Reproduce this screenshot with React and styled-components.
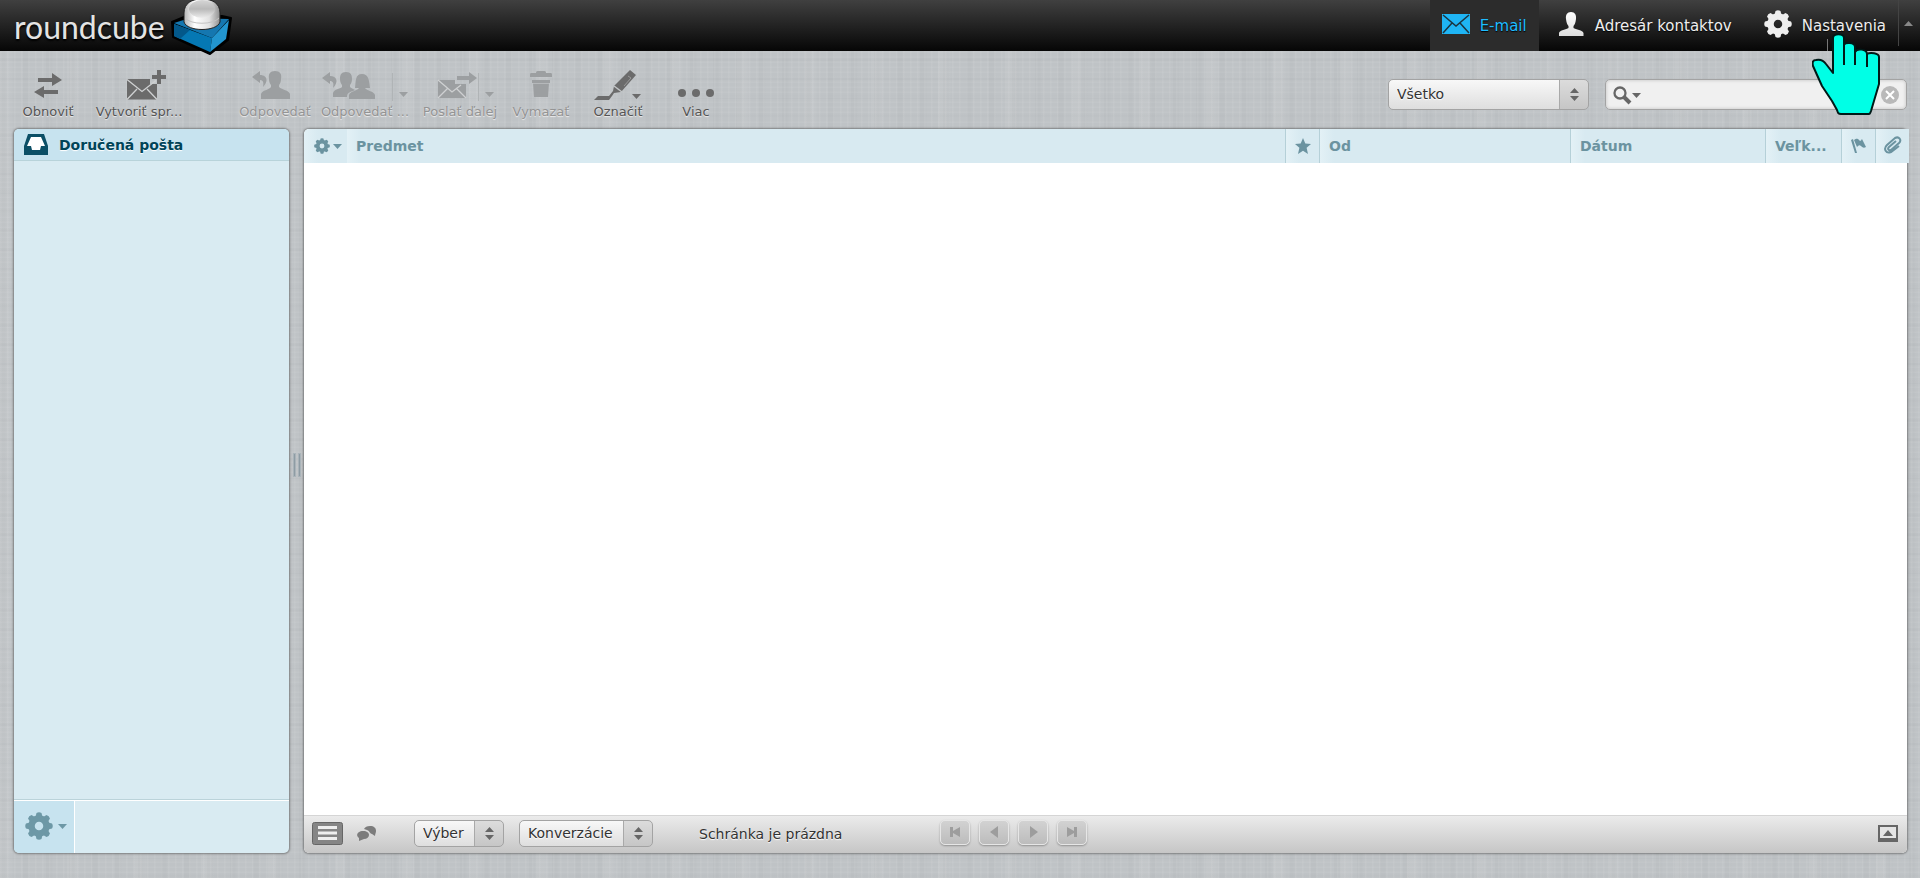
import React from 'react';
import styled, { createGlobalStyle, ThemeProvider } from 'styled-components';

const theme = {
  font: '"DejaVu Sans", Verdana, sans-serif',
  text: '#333',
  accent: '#1fbdff',
  list: '#d8eaf1',
  listHead: '#c7e3ef',
  listText: '#6b93a0',
  folderText: '#004458',
  border: '#a3a3a3',
};

const GlobalStyle = createGlobalStyle`
  * {
    box-sizing: border-box;
  }

  body {
    margin: 0;
    font-family: ${theme.font};
    font-size: 14px;
    color: ${theme.text};
  }

  button, input, select {
    font-family: inherit;
    font-size: 14px;
    color: inherit;
  }
`;

/* Linen texture: a few soft stripes with different periods */
const Page = styled.div`
  min-height: 100vh;
  display: flex;
  flex-direction: column;
  background-color: #bfc3c6;
  background-image:
    repeating-linear-gradient(90deg, rgba(255, 255, 255, 0.06) 0 1px, transparent 2px 7px),
    repeating-linear-gradient(90deg, rgba(0, 0, 0, 0.015) 0 5px, transparent 7px 23px),
    repeating-linear-gradient(90deg, rgba(255, 255, 255, 0.06) 0 9px, transparent 14px 67px),
    repeating-linear-gradient(0deg, rgba(255, 255, 255, 0.05) 0 1px, transparent 2px 5px),
    repeating-linear-gradient(0deg, rgba(0, 0, 0, 0.015) 0 2px, transparent 4px 19px);
`;

/* Top bar */
const TopBar = styled.header`
  height: 51px;
  display: flex;
  align-items: stretch;
  justify-content: space-between;
  padding-left: 14px;
  background: linear-gradient(to bottom, #404040 0%, #060606 100%);
`;

const Logo = styled.a`
  display: flex;
  align-items: flex-start;
  height: 56px;
  color: #e4e4e4;
  text-decoration: none;
`;

const LogoText = styled.span`
  width: 156px;
  font-family: Lato, sans-serif;
  font-size: 32px;
  line-height: 54px;
  text-shadow: 0 2px 2px #000;
  white-space: nowrap;
`;

const TaskNav = styled.nav`
  display: flex;
`;

const Task = styled.a`
  display: flex;
  align-items: center;
  gap: 10px;
  padding: 0 12px;
  font-size: 15px;
  line-height: 20px;
  color: ${(props) => (props.$active ? props.theme.accent : '#eee')};
  background: ${(props) => (props.$active ? '#2c2c2c' : 'transparent')};
  text-decoration: none;
  text-shadow: 0 1px 1px #000;
  white-space: nowrap;

  & + & {
    margin-left: 8px;
  }

  svg {
    flex: none;
    margin-bottom: 4px;
  }
`;

const TopToggle = styled.button`
  display: flex;
  align-items: center;
  justify-content: center;
  width: 22px;
  height: 46px;
  padding: 0 2px 0 0;
  border: 0;
  border-left: 1px solid #444;
  background: none;
  color: #888;
`;

const Pointer = styled.div`
  position: absolute;
  top: 32px;
  right: 37px;
  z-index: 5;
  pointer-events: none;

  svg {
    display: block;
  }
`;

/* Toolbar */
const Toolbar = styled.div`
  height: 78px;
  display: flex;
  justify-content: space-between;
  padding: 0 13px 0 12px;
`;

const ToolGroup = styled.div`
  display: flex;
  padding-top: 19px;
`;

const ToolItem = styled.div`
  position: relative;
  width: ${(props) => props.$width}px;
  margin-left: ${(props) => props.$space || 0}px;
`;

const ToolButton = styled.button`
  display: flex;
  flex-direction: column;
  align-items: center;
  width: 100%;
  padding: 0;
  border: 0;
  background: none;
  font-size: 13px;
  line-height: 20px;
  color: ${(props) => (props.disabled ? '#949494' : '#555')};
  text-shadow: 0 1px 1px #eee;
  white-space: nowrap;

  svg {
    display: block;
    height: 32px;
    color: ${(props) => (props.disabled ? '#9c9fa1' : '#6b6b6b')};
  }
`;

const SplitCaret = styled.button`
  position: absolute;
  top: 3px;
  right: ${(props) => props.$right}px;
  display: flex;
  align-items: center;
  justify-content: center;
  width: 22px;
  height: 28px;
  padding: 14px 0 0;
  border: 0;
  border-left: 1px solid #b0b4b6;
  background: none;
  color: #9c9fa1;
`;

const Filters = styled.div`
  display: flex;
  align-items: flex-start;
  gap: 16px;
  padding-top: 28px;
`;

const SelectBox = styled.label`
  position: relative;
  display: flex;
  width: ${(props) => props.$width}px;
  height: ${(props) => props.$height}px;

  svg {
    position: absolute;
    top: 0;
    right: 10px;
    height: 100%;
    color: #666;
    pointer-events: none;
  }
`;

const Select = styled.select`
  appearance: none;
  width: 100%;
  padding: 0 30px 2px 8px;
  border: 1px solid ${(props) => props.theme.border};
  border-radius: 5px;
  background:
    linear-gradient(to right, #a9a9a9 0 1px, transparent 1px) right / 29px 100% no-repeat,
    linear-gradient(to bottom, #dcdcdc, #c6c6c6) right / 29px 100% no-repeat,
    linear-gradient(to bottom, #f8f8f8, #dedede);
  text-shadow: 0 1px 1px #fff;
`;

const SearchBox = styled.form`
  display: flex;
  align-items: center;
  width: 302px;
  height: 31px;
  padding: 0 7px;
  border: 1px solid ${(props) => props.theme.border};
  border-radius: 5px;
  background: #f0f0f0;
  box-shadow: inset 0 0 3px 1px rgba(0, 0, 0, 0.12);
`;

const IconButton = styled.button`
  display: flex;
  align-items: center;
  padding: 0;
  border: 0;
  background: none;
  color: #666;
`;

const SearchInput = styled.input`
  flex: 1;
  min-width: 0;
  border: 0;
  outline: 0;
  background: transparent;
`;

/* Main area */
const Main = styled.main`
  flex: 1;
  display: flex;
  padding: 0 13px 25px 14px;
`;

const Folders = styled.aside`
  width: 275px;
  display: flex;
  flex-direction: column;
  border-radius: 5px;
  background: #d9ebf2;
  box-shadow: 0 0 2px 1px rgba(80, 80, 80, 0.6);
  overflow: hidden;
`;

const FolderLink = styled.a`
  display: flex;
  align-items: center;
  gap: 11px;
  height: 32px;
  padding-left: 10px;
  border-bottom: 1px solid #b8d3da;
  background: ${(props) => props.theme.listHead};
  font-weight: bold;
  color: ${(props) => props.theme.folderText};
  text-decoration: none;
  text-shadow: 0 1px 1px #fff;
`;

const FolderFooter = styled.div`
  display: flex;
  height: 53px;
  margin-top: auto;
  border-top: 1px solid #fff;
  box-shadow: 0 -1px 0 #bbd3da;
`;

const FolderOptions = styled.button`
  display: flex;
  align-items: center;
  gap: 5px;
  width: 61px;
  padding: 0 0 2px 11px;
  border: 0;
  border-right: 1px solid #fff;
  background: ${(props) => props.theme.listHead};
  color: #6d98a6;
`;

const Splitter = styled.div`
  display: flex;
  align-items: center;
  justify-content: center;
  gap: 2px;
  width: 15px;
  padding-bottom: 52px;
`;

const Grip = styled.span`
  width: 3px;
  height: 24px;
  border: 1px solid #a9b3b9;
  background: #8e9ca4;
`;

const Messages = styled.section`
  flex: 1;
  min-width: 0;
  display: flex;
  flex-direction: column;
  border-radius: 5px;
  background: #fff;
  box-shadow: 0 0 2px 1px rgba(80, 80, 80, 0.6);
`;

const MessageTable = styled.table`
  width: calc(100% + 2px);
  table-layout: fixed;
  border-collapse: separate;
  border-spacing: 0;
`;

const HeadCell = styled.th`
  width: ${(props) => (props.$width ? `${props.$width}px` : 'auto')};
  height: 34px;
  padding: ${(props) => (props.$icon ? '0' : '0 0 0 9px')};
  border-left: ${(props) => (props.$plain ? '0' : '1px solid #b5d0d8')};
  background: linear-gradient(to right, #e3f1f6 0, ${(props) => props.theme.list} 14px);
  font-size: 14px;
  text-align: left;
  color: ${(props) => props.theme.listText};
  white-space: nowrap;
  overflow: hidden;

  &:first-child {
    border-top-left-radius: 5px;
  }

  svg {
    display: block;
    margin: 0 auto;
  }
`;

const HeadOptions = styled(IconButton)`
  gap: 3px;
  padding-left: 10px;
  color: ${(props) => props.theme.listText};

  svg {
    margin: 0;
  }
`;

const ListFooter = styled.footer`
  display: flex;
  align-items: center;
  height: 38px;
  margin-top: auto;
  padding: 0 9px 2px 8px;
  border-top: 1px solid #d5d5d5;
  border-radius: 0 0 5px 5px;
  background: linear-gradient(to bottom, #ebebeb, #c6c6c6);
`;

const ModeButtons = styled.div`
  display: flex;
  gap: 14px;
  width: 102px;
`;

const FooterSelects = styled.div`
  display: flex;
  gap: 15px;
`;

const CountText = styled.span`
  width: 241px;
  margin-left: 46px;
  text-shadow: 0 1px 1px #fff;
`;

const Pager = styled.div`
  display: flex;
  gap: 9px;
  padding-bottom: 2px;
`;

const PageButton = styled.button`
  display: flex;
  align-items: center;
  justify-content: center;
  width: 30px;
  height: 25px;
  padding: 0 0 2px;
  border: 1px solid #e6e6e6;
  border-radius: 5px;
  background: linear-gradient(to bottom, #d2d2d2, #bcbcbc);
  box-shadow: 0 1px 2px rgba(0, 0, 0, 0.3);
  color: #9d9d9d;
`;

const PreviewToggle = styled(IconButton)`
  margin-left: auto;
`;

/* Icons */
const Caret = ({ up }) => (
  <svg width="9" height="5" viewBox="0 0 9 5" fill="currentColor">
    <path d={up ? 'M0 5L4.500 0L9 5z' : 'M0 0h9L4.500 5z'} />
  </svg>
);

const UpDown = () => (
  <svg width="9" height="13" viewBox="0 0 9 13" fill="currentColor">
    <path d="M0 5L4.500 0L9 5zM0 8h9L4.500 13z" />
  </svg>
);

const Gear = ({ size, color = 'currentColor' }) => (
  <svg width={size} height={size} viewBox="0 0 28 28">
    <circle cx="14" cy="14" r="7.500" fill="none" stroke={color} strokeWidth="6.500" />
    {[0, 45, 90, 135, 180, 225, 270, 315].map((angle) => (
      <path key={angle} d="M10.500 5L11.500 1q2.500-1.500 5 0L17.500 5z" fill={color} transform={`rotate(${angle} 14 14)`} />
    ))}
  </svg>
);

const CubeLogo = () => (
  <svg width="62" height="56" viewBox="0 0 62 56">
    <defs>
      <linearGradient id="ball" x1="0" y1="0" x2="0" y2="1">
        <stop offset="0" stopColor="#d6d6d6" />
        <stop offset="0.5" stopColor="#b9b9b9" />
        <stop offset="1" stopColor="#ececec" />
      </linearGradient>
      <linearGradient id="base" x1="0" y1="0" x2="1" y2="0">
        <stop offset="0" stopColor="#b5b5b5" />
        <stop offset="0.3" stopColor="#fff" />
        <stop offset="0.7" stopColor="#e2e2e2" />
        <stop offset="1" stopColor="#8f8f8f" />
      </linearGradient>
    </defs>
    <path d="M2 22L14 17L52 16L61 18L58 40L40 54L3 37z" fill="#000" stroke="#000" strokeWidth="2" strokeLinejoin="round" />
    <path d="M4 23L20 18L59 19L42 38z" fill="#1577b0" />
    <path d="M4 24L42 38L40 52L4 36z" fill="#0578b4" />
    <path d="M42 38L59 20L56 39L40 52z" fill="#2295cf" />
    <path d="M4 24L20 30L10 39L4 36z" fill="#03588a" />
    <path d="M14 13c0-10 8-14 18-14S50 3 50 13v9c-3 10-33 10-36 0z" fill="url(#base)" stroke="#222" strokeWidth="1" />
    <ellipse cx="32" cy="9" rx="13" ry="9" fill="url(#ball)" />
    <path d="M15 18c6 7 28 7 34 0" fill="none" stroke="#c4c4c4" strokeWidth="1" />
  </svg>
);

const MailIcon = () => (
  <svg width="28" height="20" viewBox="0 0 28 20">
    <path d="M0 0h28v20H0z" fill="#1fb5f5" />
    <path d="M1 1l13 11L27 1M1 19l9-10M27 19l-9-10" fill="none" stroke="#1b3440" strokeWidth="1.500" />
  </svg>
);

const UserIcon = () => (
  <svg width="26" height="24" viewBox="0 0 26 24">
    <defs>
      <linearGradient id="person" x1="0" y1="0" x2="0" y2="1">
        <stop offset="0" stopColor="#fff" />
        <stop offset="1" stopColor="#ddd" />
      </linearGradient>
    </defs>
    <path d="M12 0c4 0 5.500 3 5 7c-.5 4-1.500 6-2.500 7v2c2 1.500 9.500 2 10 5v3H0v-3c.5-3 7.500-3.500 9.500-5v-2C8.500 13 7.500 11 7 7c-.5-4 1-7 5-7z" fill="url(#person)" />
  </svg>
);

const RefreshIcon = () => (
  <svg width="28" height="32" viewBox="0 0 28 32" fill="currentColor">
    <path d="M4 8h14V3l10 7l-10 6v-4H4zM24 24H10v4L0 22l10-6v4h14z" />
  </svg>
);

const ComposeIcon = () => (
  <svg width="54" height="32" viewBox="-14 0 54 32" fill="currentColor">
    <path d="M1 9h23v5h7v15.500H1z" />
    <path d="M1 29.500l10-10.500M31 29.500L21 19M1 9.500l15 12l14-11" fill="none" stroke="#cfd1d2" strokeWidth="1.300" />
    <path d="M31 0h4v5h5v4h-5v5h-4V9h-5V5h5z" />
  </svg>
);

const ReplyIcon = () => (
  <svg width="46" height="32" viewBox="0 0 46 32" fill="currentColor">
    <path d="M0 7l8-6v4c7 0 9 6 3 12c1-5 0-7-3-7v3z" />
    <path d="M23 1c5 0 7 3 6 8c0 3-1 5-2 6v2c3 3 10 3 11 7v5H9v-5c1-4 8-4 10-7v-2c-1-1-2-3-2-6c-1-5 1-8 6-8z" />
  </svg>
);

const ReplyAllIcon = () => (
  <svg width="86" height="32" viewBox="0 0 86 32" fill="currentColor">
    <path d="M0 8l8-6v4c7 0 9 6 3 12c1-5 0-7-3-7v3z" />
    <path d="M24 2c5 0 6 3 6 7c0 3-1 5-2 6v2c1 1 3 2 5 3c-4 2-8 2-8 7H11v-4c1-4 7-4 9-6v-2c-1-1-2-3-2-6c0-4 1-7 6-7z" />
    <path d="M40 4c7 0 7 7 8 14h-5c2 3 9 3 10 7v4H27v-4c1-4 8-4 10-7h-4c1-7 0-14 7-14z" />
  </svg>
);

const ForwardIcon = () => (
  <svg width="46" height="32" viewBox="0 0 46 32" fill="currentColor">
    <path d="M1 10h17v4h11v14H1z" />
    <path d="M1 10l14 12l9-7M1 28l10-10M29 28L19 18" fill="none" stroke="#cfd1d2" strokeWidth="1.300" />
    <path d="M20 6h12V2l8 6l-8 6v-4H20z" />
  </svg>
);

const TrashIcon = () => (
  <svg width="22" height="32" viewBox="0 0 22 32" fill="currentColor">
    <path d="M6 3c0-2 1-2 3-2h4c2 0 3 0 3 2h5c1 0 1 1 1 4H0c0-3 0-4 1-4zM2 10h18v3h-1l-1 14H4L3 13H2z" />
    <path d="M3 13.500h16" stroke="#b5b8ba" />
  </svg>
);

const MarkIcon = () => (
  <svg width="48" height="32" viewBox="0 0 48 32" fill="currentColor">
    <path d="M36 0l6 5l-15 17l-7 1l-2 3h-3l4-5l1-5z" />
    <path d="M20 16l8 6" stroke="#c2c5c7" strokeWidth="1.500" />
    <path d="M34 6l3 2l-7 8" fill="none" stroke="#999" />
    <path d="M4 26h14l-3 4H0z" />
    <path d="M38 24h9l-4.500 5z" />
  </svg>
);

const MoreIcon = () => (
  <svg width="36" height="32" viewBox="0 0 36 32" fill="currentColor">
    <circle cx="4" cy="23" r="4" />
    <circle cx="18" cy="23" r="4" />
    <circle cx="32" cy="23" r="4" />
  </svg>
);

const SearchIcon = () => (
  <svg width="29" height="20" viewBox="0 0 29 20">
    <circle cx="7" cy="8" r="5.500" fill="none" stroke="#666" strokeWidth="2.300" />
    <path d="M11 12l6 6" stroke="#666" strokeWidth="4" />
    <path d="M19 8h9l-4.500 5z" fill="#666" />
  </svg>
);

const ClearIcon = () => (
  <svg width="18" height="18" viewBox="0 0 18 18">
    <circle cx="9" cy="9" r="9" fill="#b9b9b9" />
    <path d="M5 5l8 8M13 5l-8 8" stroke="#fff" strokeWidth="2" />
  </svg>
);

const InboxIcon = () => (
  <svg width="24" height="21" viewBox="0 0 24 21">
    <path d="M4 0h16l4 12v9H0v-9z" fill="#0b4f66" />
    <path d="M7 3h10l4 9h-4l-1 4H8l-1-4H3z" fill="#fff" />
  </svg>
);

const StarIcon = () => (
  <svg width="16" height="16" viewBox="0 0 16 16" fill="currentColor">
    <path d="M8 0l2.300 5.500l5.700.5l-4.400 3.700L13 16l-5-3.200L3 16l1.400-6.300L0 6l5.700-.5z" />
  </svg>
);

const FlagIcon = () => (
  <svg width="16" height="16" viewBox="0 0 16 16" fill="currentColor">
    <path d="M0 2l2-1l4 14H4zM3 2c2-1 3-2 5 0s2 0 3-1l4 8c-2 1-3 1-5-1s-3 0-4 1z" />
  </svg>
);

const ClipIcon = () => (
  <svg width="18" height="20" viewBox="0 0 18 20" fill="none" stroke="currentColor" strokeWidth="2">
    <path d="M12 5l-7 6c-2 2 0 4 2 3l8-7c3-3 0-7-4-5L3 9c-4 4-1 9 4 7l8-6" />
  </svg>
);

const ListIcon = () => (
  <svg width="31" height="23" viewBox="0 0 31 23">
    <rect x="0.500" y="0.500" width="30" height="22" rx="2" fill="#858585" stroke="#666" />
    <path d="M6 5.500h19M6 11h19M6 16.500h19" stroke="#eee" strokeWidth="3" />
  </svg>
);

const ThreadsIcon = () => (
  <svg width="20" height="16" viewBox="0 0 20 16" fill="#7c7c7c">
    <path d="M13 0c4 0 6 2 6 5c0 2-1 3-1 5l-3-2c-2 0-2-3-5-4L7 3c1-2 3-3 6-3z" />
    <path d="M6 5c4 0 6 2 6 4s-2 4-5 4l-5 2v-3C-2 9 1 5 6 5z" />
  </svg>
);

const PageIcon = ({ d }) => (
  <svg width="12" height="12" viewBox="0 0 12 12" fill="currentColor">
    <path d={d} />
  </svg>
);

const PreviewIcon = () => (
  <svg width="20" height="17" viewBox="0 0 20 17">
    <rect x="1" y="1" width="18" height="15" fill="#e4e4e4" stroke="#666" strokeWidth="2" />
    <path d="M5 11l5-6l5 6zM1 13h18v3H1z" fill="#666" />
  </svg>
);

const HandIcon = () => (
  <svg width="71" height="83" viewBox="0 0 71 83">
    <path d="M15.500 7v12" stroke="#777" />
    <path
      d="M21 40V6c0-5 11-5 11 0v7c1-3 11-3 11 2v5c2-4 12-3 12 2c3-2 12-1 12 3v27l-8 27c-1 3-1 3-4 3H29c-3 0-3-1-4-4l-5-9L10 54L1 34c-1-4 0-6 3-6c5-1 8 1 10 4l7 9z"
      fill="#00ffe6"
      stroke="#001a18"
      strokeWidth="2"
      strokeLinejoin="round"
    />
    <path d="M32 10v23M43 17v16M55 22v13" stroke="#001a18" strokeWidth="2" />
  </svg>
);

const tools = [
  { label: 'Obnoviť', icon: <RefreshIcon />, width: 72 },
  { label: 'Vytvoriť spr...', icon: <ComposeIcon />, width: 110 },
  { label: 'Odpovedať', icon: <ReplyIcon />, width: 86, space: 38, disabled: true },
  { label: 'Odpovedať ...', icon: <ReplyAllIcon />, width: 94, disabled: true, split: 'Odpovedať všetkým', right: -2 },
  { label: 'Poslať ďalej', icon: <ForwardIcon />, width: 96, disabled: true, split: 'Možnosti preposlania', right: 8 },
  { label: 'Vymazať', icon: <TrashIcon />, width: 66, disabled: true },
  { label: 'Označiť', icon: <MarkIcon />, width: 88 },
  { label: 'Viac', icon: <MoreIcon />, width: 68 },
];

const pages = [
  { label: 'Prvá strana', d: 'M1 1h3v4l7-4v10L4 7v4H1z' },
  { label: 'Predchádzajúca strana', d: 'M10 0v12L2 6z' },
  { label: 'Nasledujúca strana', d: 'M3 0v12l8-6z' },
  { label: 'Posledná strana', d: 'M1 1l7 4V1h3v10H8V7l-7 4z' },
];

const Dropdown = ({ label, value, width, height }) => (
  <SelectBox $width={width} $height={height}>
    <Select aria-label={label} defaultValue={value}>
      <option>{value}</option>
    </Select>
    <UpDown />
  </SelectBox>
);

const Header = () => (
  <TopBar>
    <Logo href="#mail" aria-label="roundcube">
      <LogoText>roundcube</LogoText>
      <CubeLogo />
    </Logo>
    <TaskNav>
      <Task href="#mail" $active>
        <MailIcon />
        E-mail
      </Task>
      <Task href="#contacts">
        <UserIcon />
        Adresár kontaktov
      </Task>
      <Task href="#settings">
        <Gear size={28} color="#eee" />
        Nastavenia
      </Task>
      <TopToggle aria-label="Skryť lištu">
        <Caret up />
      </TopToggle>
    </TaskNav>
  </TopBar>
);

const App = () => {
  return (
    <ThemeProvider theme={theme}>
      <GlobalStyle />
      <Page>
        <Header />
        <Toolbar>
          <ToolGroup>
            {tools.map((tool) => (
              <ToolItem key={tool.label} $width={tool.width} $space={tool.space}>
                <ToolButton disabled={tool.disabled}>
                  {tool.icon}
                  {tool.label}
                </ToolButton>
                {tool.split && (
                  <SplitCaret aria-label={tool.split} $right={tool.right} disabled>
                    <Caret />
                  </SplitCaret>
                )}
              </ToolItem>
            ))}
          </ToolGroup>
          <Filters>
            <Dropdown label="Filter" value="Všetko" width={201} height={31} />
            <SearchBox>
              <IconButton type="button" aria-label="Možnosti hľadania">
                <SearchIcon />
              </IconButton>
              <SearchInput type="text" aria-label="Hľadať" />
              <IconButton type="reset" aria-label="Vymazať hľadanie">
                <ClearIcon />
              </IconButton>
            </SearchBox>
          </Filters>
        </Toolbar>
        <Main>
          <Folders>
            <FolderLink href="#inbox">
              <InboxIcon />
              Doručená pošta
            </FolderLink>
            <FolderFooter>
              <FolderOptions aria-label="Akcie s priečinkami">
                <Gear size={28} />
                <Caret />
              </FolderOptions>
            </FolderFooter>
          </Folders>
          <Splitter>
            <Grip />
            <Grip />
          </Splitter>
          <Messages>
            <MessageTable>
              <thead>
                <tr>
                  <HeadCell $width={43} $icon $plain>
                    <HeadOptions aria-label="Nastavenie zoznamu">
                      <Gear size={16} />
                      <Caret />
                    </HeadOptions>
                  </HeadCell>
                  <HeadCell $plain>Predmet</HeadCell>
                  <HeadCell $width={34} $icon aria-label="Stav">
                    <StarIcon />
                  </HeadCell>
                  <HeadCell $width={251}>Od</HeadCell>
                  <HeadCell $width={195}>Dátum</HeadCell>
                  <HeadCell $width={76}>Veľk...</HeadCell>
                  <HeadCell $width={34} $icon aria-label="Označenie">
                    <FlagIcon />
                  </HeadCell>
                  <HeadCell $width={34} $icon aria-label="Príloha">
                    <ClipIcon />
                  </HeadCell>
                </tr>
              </thead>
              <tbody />
            </MessageTable>
            <ListFooter>
              <ModeButtons>
                <IconButton aria-label="Zoznam">
                  <ListIcon />
                </IconButton>
                <IconButton aria-label="Konverzácie">
                  <ThreadsIcon />
                </IconButton>
              </ModeButtons>
              <FooterSelects>
                <Dropdown label="Výber" value="Výber" width={90} height={27} />
                <Dropdown label="Konverzácie" value="Konverzácie" width={134} height={27} />
              </FooterSelects>
              <CountText>Schránka je prázdna</CountText>
              <Pager>
                {pages.map((page) => (
                  <PageButton key={page.label} aria-label={page.label} disabled>
                    <PageIcon d={page.d} />
                  </PageButton>
                ))}
              </Pager>
              <PreviewToggle aria-label="Zobraziť náhľad">
                <PreviewIcon />
              </PreviewToggle>
            </ListFooter>
          </Messages>
        </Main>
        <Pointer>
          <HandIcon />
        </Pointer>
      </Page>
    </ThemeProvider>
  );
};

export default App;
